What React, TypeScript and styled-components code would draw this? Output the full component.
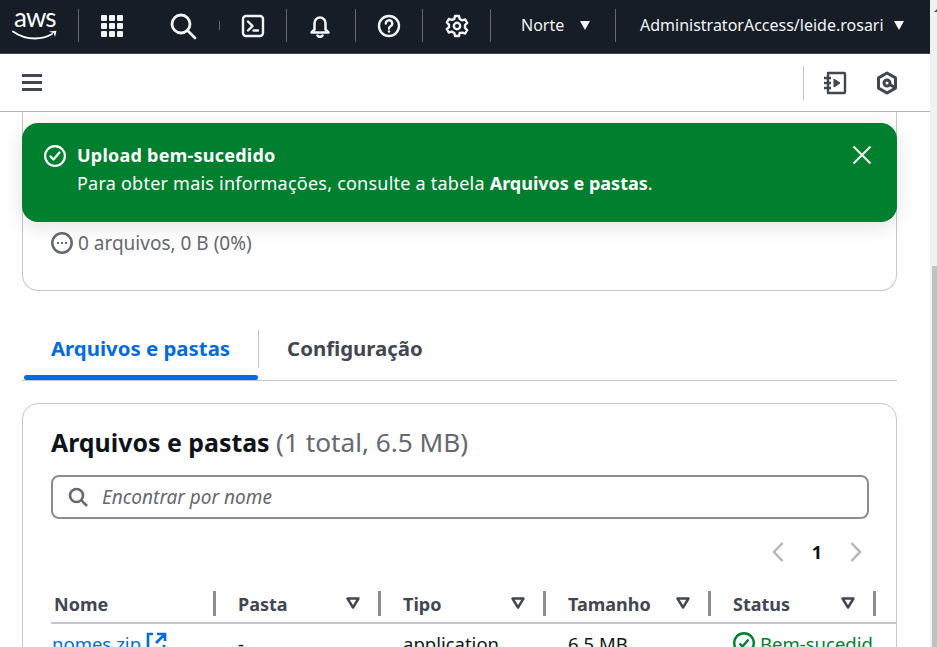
import React from "react";
import styled, { createGlobalStyle } from "styled-components";

const GlobalStyle = createGlobalStyle`
  html, body {
    margin: 0;
    padding: 0;
    height: 100%;
    overflow: hidden;
    background: #fff;
    font-family: "Noto Sans", "Open Sans", sans-serif;
  }
  * { box-sizing: border-box; }
`;

const columns = [
  { label: "Nome", sortable: false },
  { label: "Pasta", sortable: true },
  { label: "Tipo", sortable: true },
  { label: "Tamanho", sortable: true },
  { label: "Status", sortable: true },
];

const App: React.FC = () => {
  return (
    <Page>
      <GlobalStyle />
      <Main>
        <TopBar>
          <LogoBox>
            <LogoText>aws</LogoText>
            <svg width="46" height="12" viewBox="0 0 46 12" fill="none">
              <path d="M1 2.500C8 7.500 15 9.500 23 9.500c6 0 12-1.500 17-4.500" stroke="#fff" strokeWidth="1.800" strokeLinecap="round" />
              <path d="M37 2.500l7.500-.8-1.500 6.300-1.200-3.800z" fill="#fff" />
            </svg>
          </LogoBox>
          <TopDivider $left={78} />
          <TopIcon $left={112}>
            <svg width="24" height="24" viewBox="0 0 24 24" fill="#f3f3f7">
              {[1, 9, 17].flatMap((y) =>
                [1, 9, 17].map((x) => <rect key={`${x}-${y}`} x={x} y={y} width="6" height="6" rx="1" />)
              )}
            </svg>
          </TopIcon>
          <TopIcon $left={183}>
            <svg width="28" height="28" viewBox="0 0 28 28" fill="none" stroke="#f3f3f7" strokeWidth="2.800">
              <circle cx="12" cy="12" r="9" />
              <path d="M18.500 18.500L26 26" strokeLinecap="round" />
            </svg>
          </TopIcon>
          <TopDivider $left={219} $short />
          <TopIcon $left={253}>
            <svg width="24" height="24" viewBox="0 0 24 24" fill="none" stroke="#f3f3f7" strokeWidth="2.400">
              <rect x="2" y="2" width="20" height="20" rx="3" />
              <path d="M7 7.500l4.500 4.500L7 16.500M12.500 16.500H17" strokeLinecap="round" strokeLinejoin="round" />
            </svg>
          </TopIcon>
          <TopDivider $left={286} />
          <TopIcon $left={320}>
            <svg width="24" height="24" viewBox="0 0 24 24" fill="none" stroke="#f3f3f7" strokeWidth="2.500" strokeLinejoin="round">
              <path d="M6.500 15.500V9a5.500 5.500 0 0 1 11 0v6.500l3 3H3.500l3-3z" />
              <path d="M9.500 21.500a3 3 0 0 0 5 0" strokeLinecap="round" />
            </svg>
          </TopIcon>
          <TopDivider $left={355} />
          <TopIcon $left={389}>
            <svg width="24" height="24" viewBox="0 0 24 24" fill="none" stroke="#f3f3f7" strokeWidth="2.400">
              <circle cx="12" cy="12" r="10" />
              <path d="M8.800 9.500a3.200 3.200 0 1 1 4.700 2.800c-1 .6-1.500 1.200-1.500 2.200" strokeLinecap="round" />
              <circle cx="12" cy="17.500" r="1.300" fill="#f3f3f7" stroke="none" />
            </svg>
          </TopIcon>
          <TopDivider $left={422} />
          <TopIcon $left={457}>
            <svg width="24" height="24" viewBox="0 0 24 24" fill="none" stroke="#f3f3f7" strokeWidth="2.400" strokeLinejoin="round">
              <path d="M10 2h4l.7 3 2.500 1.400 3-.9 2 3.500-2.200 2.100v2.800l2.200 2.100-2 3.500-3-.9L14.700 19l-.7 3h-4l-.7-3-2.500-1.400-3 .9-2-3.500L4 13.400v-2.800L1.800 8.500l2-3.500 3 .9L9.300 5 10 2z" />
              <circle cx="12" cy="12" r="3.200" />
            </svg>
          </TopIcon>
          <TopDivider $left={490} />
          <TopLabel $left={521}>Norte</TopLabel>
          <Caret $left={580} />
          <TopDivider $left={615} />
          <TopLabel $left={640}>AdministratorAccess/leide.rosari</TopLabel>
          <Caret $left={894} />
        </TopBar>

        <SubBar>
          <MenuButton aria-label="menu">
            <span />
            <span />
            <span />
          </MenuButton>
          <SubActions>
            <SubIcon>
              <svg width="24" height="24" viewBox="0 0 24 24" fill="none" stroke="#424650" strokeWidth="2.400" strokeLinejoin="round">
                <path d="M5 2h16a1 1 0 0 1 1 1v18a1 1 0 0 1-1 1H5V2z" />
                <path d="M1 7h7M1 12h7M1 17h7" />
                <path d="M11 8l6 4-6 4V8z" fill="#424650" strokeWidth="1" />
              </svg>
            </SubIcon>
            <SubIcon>
              <svg width="22" height="24" viewBox="0 0 22 24" fill="none" stroke="#424650" strokeWidth="3" strokeLinejoin="round">
                <path d="M11 2l8.500 4.900v10.200L11 22l-8.500-4.900V6.900L11 2z" />
                <circle cx="11" cy="12" r="3" />
                <path d="M14 13.500l5.500 3.500" />
              </svg>
            </SubIcon>
          </SubActions>
        </SubBar>

        <Content>
          <Flash>
            <FlashIcon>
              <svg width="22" height="22" viewBox="0 0 22 22" fill="none" stroke="#fff" strokeWidth="2.200">
                <circle cx="11" cy="11" r="9.900" />
                <path d="M6.500 11.500l3 3 6-7" strokeLinecap="round" strokeLinejoin="round" />
              </svg>
            </FlashIcon>
            <FlashBody>
              <FlashTitle>Upload bem-sucedido</FlashTitle>
              <FlashText>
                Para obter mais informações, consulte a tabela <strong>Arquivos e pastas</strong>.
              </FlashText>
            </FlashBody>
            <FlashClose>
              <svg width="20" height="20" viewBox="0 0 20 20" fill="none" stroke="#e9ebed" strokeWidth="2.200">
                <path d="M1.500 1.500l17 17M18.500 1.500l-17 17" />
              </svg>
            </FlashClose>
          </Flash>

          <SummaryCard>
            <SummaryRow>
              <svg width="22" height="22" viewBox="0 0 22 22" fill="none" stroke="#656871" strokeWidth="2.500">
                <circle cx="11" cy="11" r="9.700" />
                <path d="M6 11h2M10 11h2M14 11h2" strokeWidth="2.200" />
              </svg>
              0 arquivos, 0 B (0%)
            </SummaryRow>
          </SummaryCard>

          <Tabs>
            <Tab $active>Arquivos e pastas</Tab>
            <TabSep />
            <Tab>Configuração</Tab>
          </Tabs>

          <FilesCard>
            <CardTitle>
              Arquivos e pastas <Count>(1 total, 6.5 MB)</Count>
            </CardTitle>
            <SearchBox>
              <svg width="20" height="20" viewBox="0 0 20 20" fill="none" stroke="#656871" strokeWidth="2.600">
                <circle cx="8.500" cy="8.500" r="6.500" />
                <path d="M13.200 13.200L19 19" />
              </svg>
              <SearchText>Encontrar por nome</SearchText>
            </SearchBox>
            <Pager>
              <svg width="12" height="20" viewBox="0 0 12 20" fill="none" stroke="#b4b4bb" strokeWidth="2.400">
                <path d="M10.500 1L2 10l8.500 9" />
              </svg>
              <PageNumber>1</PageNumber>
              <svg width="12" height="20" viewBox="0 0 12 20" fill="none" stroke="#b4b4bb" strokeWidth="2.400">
                <path d="M1.500 1L10 10l-8.500 9" />
              </svg>
            </Pager>
            <HeaderRow>
              {columns.map((col, i) => (
                <HeaderCell key={col.label} $first={i === 0}>
                  {col.label}
                  {col.sortable && (
                    <SortIcon>
                      <svg width="14" height="12" viewBox="0 0 14 12" fill="none" stroke="#424650" strokeWidth="2.400" strokeLinejoin="round">
                        <path d="M1.500 1.500h11L7 10.500z" />
                      </svg>
                    </SortIcon>
                  )}
                </HeaderCell>
              ))}
            </HeaderRow>
            <DataRow>
              <DataCell $first>
                <FileLink>nomes.zip</FileLink>
                <svg width="21" height="20" viewBox="0 0 21 20" fill="none" stroke="#006ce0" strokeWidth="2.600">
                  <path d="M7 2H2v16h16v-5M11 2h8v7M19 2l-9 9" />
                </svg>
              </DataCell>
              <DataCell>-</DataCell>
              <DataCell>application</DataCell>
              <DataCell>6.5 MB</DataCell>
              <DataCell>
                <svg width="22" height="22" viewBox="0 0 22 22" fill="none" stroke="#00802f" strokeWidth="2.400">
                  <circle cx="11" cy="11" r="9.800" />
                  <path d="M6.500 11.500l3 3 6-7" />
                </svg>
                <StatusText>Bem-sucedid</StatusText>
              </DataCell>
            </DataRow>
          </FilesCard>
        </Content>
      </Main>
      <ScrollTrack>
        <ScrollArrow />
        <ScrollThumb />
      </ScrollTrack>
    </Page>
  );
};

export default App;

const Page = styled.div`
  width: 937px;
  height: 647px;
  display: flex;
  overflow: hidden;
`;

const Main = styled.div`
  width: 930px;
  flex: none;
  display: flex;
  flex-direction: column;
`;

const TopBar = styled.header`
  position: relative;
  height: 54px;
  flex: none;
  background: #161d26;
  border-bottom: 1px solid #424650;
`;

const LogoBox = styled.div`
  position: absolute;
  left: 12px;
  top: 5px;
  display: flex;
  flex-direction: column;
  align-items: flex-start;
`;

const LogoText = styled.span`
  margin-left: 2px;
  font-family: "Lato", sans-serif;
  font-size: 26px;
  font-weight: 400;
  line-height: 24px;
  color: #fff;
  letter-spacing: -0.9px;
`;

const TopDivider = styled.span<{ $left: number; $short?: boolean }>`
  position: absolute;
  left: ${(p) => p.$left}px;
  top: ${(p) => (p.$short ? 21 : 9)}px;
  height: ${(p) => (p.$short ? 9 : 33)}px;
  width: 1px;
  background: #656871;
`;

const TopIcon = styled.span<{ $left: number }>`
  position: absolute;
  left: ${(p) => p.$left}px;
  top: 26px;
  transform: translate(-50%, -50%);
  display: flex;
`;

const TopLabel = styled.span<{ $left: number }>`
  position: absolute;
  left: ${(p) => p.$left}px;
  top: 14px;
  font-size: 16px;
  line-height: 22px;
  color: #f3f3f7;
  white-space: nowrap;
`;

const Caret = styled.span<{ $left: number }>`
  position: absolute;
  left: ${(p) => p.$left}px;
  top: 21px;
  width: 0;
  height: 0;
  border-left: 5.500px solid transparent;
  border-right: 5.500px solid transparent;
  border-top: 9px solid #f3f3f7;
`;

const SubBar = styled.div`
  height: 58px;
  flex: none;
  display: flex;
  align-items: center;
  justify-content: space-between;
  padding: 0 32px 0 22px;
  border-bottom: 1px solid #b4b4bb;
`;

const MenuButton = styled.button`
  width: 20px;
  height: 17px;
  padding: 0;
  border: 0;
  background: none;
  display: flex;
  flex-direction: column;
  justify-content: space-between;
  margin-bottom: 1px;

  span {
    display: block;
    height: 3px;
    background: #424650;
  }
`;

const SubActions = styled.div`
  height: 34px;
  display: flex;
  align-items: center;
  gap: 29px;
  padding-left: 19px;
  border-left: 1px solid #c6c6cd;
`;

const SubIcon = styled.span`
  display: flex;
`;

const Content = styled.main`
  position: relative;
  flex: 1;
  padding: 0 33px 0 22px;
  overflow: hidden;
`;

const Flash = styled.div`
  position: absolute;
  left: 22px;
  top: 11px;
  width: 875px;
  height: 99px;
  z-index: 2;
  display: flex;
  padding: 18px 25px 0 22px;
  background: #00802f;
  border-radius: 16px;
  color: #fff;
  box-shadow: 0 4px 20px rgba(0, 7, 22, 0.12);
`;

const FlashIcon = styled.span`
  display: flex;
  margin: 4px 11px 0 0;
`;

const FlashBody = styled.div`
  flex: 1;
`;

const FlashTitle = styled.div`
  font-size: 18px;
  line-height: 28px;
  font-weight: 700;
  letter-spacing: 0.24px;
`;

const FlashText = styled.div`
  font-size: 18px;
  line-height: 28px;
  letter-spacing: 0.23px;

  strong {
    letter-spacing: 0;
  }
`;

const FlashClose = styled.span`
  display: flex;
  margin-top: 4px;
`;

const SummaryCard = styled.section`
  height: 179px;
  padding-top: 120px;
  padding-left: 28px;
  border: 1px solid #c6c6cd;
  border-top: 0;
  border-radius: 0 0 16px 16px;
`;

const SummaryRow = styled.div`
  display: flex;
  align-items: center;
  gap: 5px;
  font-size: 19px;
  line-height: 22px;
  color: #656871;
`;

const Tabs = styled.nav`
  height: 51px;
  margin-top: 39px;
  padding: 0 2px;
  display: flex;
  align-items: flex-start;
  border-bottom: 1px solid #c6c6cd;
`;

const Tab = styled.div<{ $active?: boolean }>`
  position: relative;
  height: 50px;
  padding: 2px 28px 0 27px;
  font-size: 20.400px;
  line-height: 32px;
  font-weight: 700;
  color: ${(p) => (p.$active ? "#006ce0" : "#424650")};

  &::after {
    content: "";
    display: ${(p) => (p.$active ? "block" : "none")};
    position: absolute;
    left: 0;
    right: 0;
    bottom: 0;
    height: 5px;
    border-radius: 3px;
    background: #006ce0;
  }
`;

const TabSep = styled.span`
  width: 1px;
  height: 38px;
  margin-right: 1px;
  background: #c6c6cd;
`;

const FilesCard = styled.section`
  margin-top: 22px;
  height: 300px;
  padding: 18px 27px 0 28px;
  border: 1px solid #c6c6cd;
  border-radius: 16px;
`;

const CardTitle = styled.h2`
  margin: 0;
  font-size: 24.900px;
  line-height: 40px;
  font-weight: 700;
  color: #0f141a;
  white-space: nowrap;
`;

const Count = styled.span`
  font-size: 26.200px;
  font-weight: 400;
  color: #656871;
`;

const SearchBox = styled.div`
  margin-top: 13px;
  height: 44px;
  display: flex;
  align-items: center;
  gap: 14px;
  padding: 0 15px;
  border: 2px solid #8c8c94;
  border-radius: 8px;
`;

const SearchText = styled.span`
  font-size: 19px;
  font-style: italic;
  color: #656871;
`;

const Pager = styled.div`
  margin-top: 21px;
  display: flex;
  justify-content: flex-end;
  align-items: center;
  gap: 28px;
  height: 24px;
  padding-right: 7px;
`;

const PageNumber = styled.span`
  font-size: 18px;
  font-weight: 700;
  color: #0f141a;
`;

const HeaderRow = styled.div`
  margin-top: 16px;
  margin-right: -27px;
  height: 44px;
  display: flex;
  border-bottom: 2px solid #c6c6cd;
`;

const HeaderCell = styled.div<{ $first?: boolean }>`
  position: relative;
  width: 165px;
  flex: none;
  height: 25px;
  margin-top: 11px;
  padding-left: ${(p) => (p.$first ? 3 : 22)}px;
  display: flex;
  align-items: center;
  font-size: 18px;
  font-weight: 700;
  color: #424650;
  border-right: 3px solid #8c8c94;
`;

const SortIcon = styled.span`
  position: absolute;
  right: 18px;
  top: 6px;
  display: flex;
`;

const DataRow = styled.div`
  display: flex;
  height: 40px;
  padding-top: 8px;
`;

const DataCell = styled.div<{ $first?: boolean }>`
  width: 165px;
  flex: none;
  padding-left: ${(p) => (p.$first ? 1 : 22)}px;
  display: flex;
  align-items: flex-start;
  gap: 5px;
  font-size: 18.500px;
  line-height: 24px;
  color: #0f141a;
  white-space: nowrap;
  overflow: hidden;
`;

const FileLink = styled.span`
  color: #006ce0;
  text-decoration: underline;
`;

const StatusText = styled.span`
  color: #00802f;
`;

const ScrollTrack = styled.aside`
  position: relative;
  width: 7px;
  flex: none;
  overflow: hidden;
  background: #f1f1f1;
`;

const ScrollArrow = styled.span`
  position: absolute;
  top: 8px;
  left: 4px;
  width: 0;
  height: 0;
  border-left: 4px solid transparent;
  border-right: 4px solid transparent;
  border-bottom: 4px solid #505050;
`;

const ScrollThumb = styled.span`
  position: absolute;
  left: 2px;
  right: 0;
  top: 266px;
  bottom: 0;
  background: #c1c1c1;
`;
